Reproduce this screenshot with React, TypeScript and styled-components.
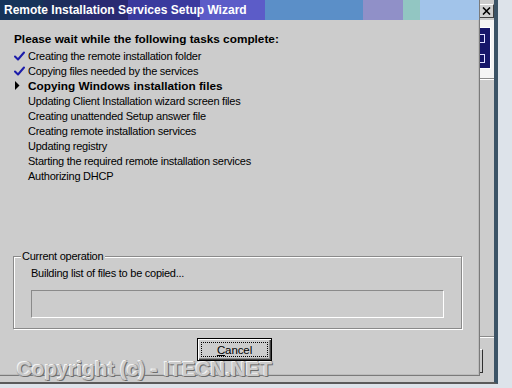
import React from 'react'
import styled, { createGlobalStyle } from 'styled-components'

const GlobalStyle = createGlobalStyle`
    html, body {
        margin: 0;
        padding: 0;
        background: #dde3ea;
    }
    body {
        font-family: "Liberation Sans", Arial, sans-serif;
        font-size: 11px;
        color: #000;
    }
`

const Desktop = styled.div`
    position: relative;
    width: 512px;
    height: 388px;
    overflow: hidden;
    background: #dde3ea;
`

/* the wizard window that sits behind the progress dialog */
const BackWindow = styled.div`
    position: absolute;
    left: 0;
    top: 0;
    width: 498px;
    height: 384px;
    box-sizing: border-box;
    background: #cccccc;
    border-right: 4px solid #3b5366;
    border-bottom: 2px solid #5a5a5a;
    display: flex;
    flex-direction: column;
`

const BackTitle = styled.div`
    height: 20px;
    display: flex;
    align-items: center;
    justify-content: flex-end;
`

const CloseButton = styled.div`
    width: 15px;
    height: 14px;
    box-sizing: border-box;
    background: #d0d0d0;
    border: 1px solid;
    border-color: #fff #404040 #404040 #fff;
    display: flex;
    align-items: center;
    justify-content: center;
    margin-top: 1px;
`

const BackHeader = styled.div`
    height: 60px;
    background: #f4f4f4;
    border-bottom: 1px solid #fff;
    box-shadow: 0 -1px 0 #8a8a8a inset;
    display: flex;
    justify-content: flex-end;
    padding: 7px 3px 0 0;
    box-sizing: border-box;
`

const HeaderArt = styled.div`
    width: 14px;
    height: 40px;
    background: #16166a;
    border: 1px solid #fff;
    display: flex;
    flex-direction: column;
    justify-content: space-around;
    align-items: flex-start;
`

const ArtMark = styled.div`
    width: 5px;
    height: 7px;
    border: 1px solid #e0e0ff;
    margin-left: 2px;
`

const BackBody = styled.div`
    flex: 1;
`

const BackFooter = styled.div`
    border-top: 1px solid #8a8a8a;
    box-shadow: 0 1px 0 #fff inset;
    height: 46px;
    display: flex;
    justify-content: flex-end;
    padding: 12px 11px 0 0;
    box-sizing: border-box;
`

const BackButton = styled.div`
    width: 75px;
    height: 24px;
    box-sizing: border-box;
    border: 1px solid;
    border-color: #fff #303030 #303030 #fff;
`

/* the progress dialog in front */
const Dialog = styled.div`
    position: absolute;
    left: 0;
    top: 0;
    width: 480px;
    height: 376px;
    box-sizing: border-box;
    background: #cccccc;
    border-right: 1px solid #7a7a7a;
    border-bottom: 1px solid #7a7a7a;
    box-shadow: inset -1px -1px 0 #bcbcbc;
    display: flex;
    flex-direction: column;
`

const TitleBar = styled.div`
    height: 20px;
    display: flex;
    align-items: center;
    padding-left: 4px;
    background: linear-gradient(
        to right,
        #16345a 0, #16345a 43px,
        #1d2d5c 43px, #1d2d5c 80px,
        #2a2a72 80px, #2a2a72 128px,
        #3a3a9e 128px, #3a3a9e 200px,
        #5c5cc8 200px, #5c5cc8 265px,
        #5b8fc8 265px, #5b8fc8 363px,
        #9090c8 363px, #9090c8 403px,
        #92c6c2 403px, #92c6c2 420px,
        #a2c4ea 420px, #a2c4ea 100%
    );
    color: #fff;
    font-weight: bold;
    font-size: 12px;
    white-space: nowrap;
`

const Body = styled.div`
    flex: 1;
    display: flex;
    flex-direction: column;
    padding: 12px 17px 14px 13px;
`

const Heading = styled.div`
    font-weight: bold;
    font-size: 11.8px;
    line-height: 15px;
    padding-left: 1px;
`

const TaskList = styled.div`
    margin-top: 1px;
    display: flex;
    flex-direction: column;
`

const TaskRow = styled.div<{ $current?: boolean }>`
    display: grid;
    grid-template-columns: 15px 1fr;
    align-items: center;
    height: 15px;
    font-size: ${p => (p.$current ? '11.8px' : '11px')};
    font-weight: ${p => (p.$current ? 'bold' : 'normal')};
    letter-spacing: ${p => (p.$current ? '0' : '-0.25px')};
    white-space: nowrap;
`

const Marker = styled.div`
    display: flex;
    align-items: center;
    padding-left: 1px;
`

const Group = styled.fieldset`
    margin: auto 0 0 0;
    padding: 0 17px 10px 17px;
    border: 1px solid #8a8a8a;
    box-shadow: inset 1px 1px 0 #fff, 1px 1px 0 #fff;
    display: flex;
    flex-direction: column;
    min-width: 0;
`

const Legend = styled.legend`
    padding: 0 2px 0 1px;
    margin-left: -10px;
    font-size: 11px;
    line-height: 15px;
    letter-spacing: -0.25px;
    background: #cccccc;
`

const OperationText = styled.div`
    margin-top: 2px;
    line-height: 15px;
    letter-spacing: -0.25px;
`

const ProgressBar = styled.div`
    margin-top: 9px;
    height: 28px;
    box-sizing: border-box;
    border: 1px solid;
    border-color: #8a8a8a #fff #fff #8a8a8a;
`

const ButtonRow = styled.div`
    display: flex;
    padding-left: 184px;
    margin-top: 9px;
`

const PushButton = styled.div<{ $default?: boolean }>`
    width: 75px;
    height: 23px;
    box-sizing: border-box;
    border: 1px solid ${p => (p.$default ? '#000' : 'transparent')};
    box-shadow: inset 1px 1px 0 #fff, inset -1px -1px 0 #404040, inset -2px -2px 0 #8a8a8a;
    padding: 3px;
    display: flex;
`

const FocusRing = styled.div`
    flex: 1;
    border: 1px dotted #000;
    display: flex;
    align-items: center;
    justify-content: center;
    font-size: 11.5px;
    letter-spacing: -0.1px;
`

const Watermark = styled.div`
    position: absolute;
    left: 17px;
    top: 357px;
    font-family: "Liberation Sans", Arial, sans-serif;
    font-weight: bold;
    font-size: 20.6px;
    color: #cbcbcb;
    white-space: nowrap;
    text-shadow: 1px 1px 0 #6e6e6e, -1px -1px 0 #f4f4f4, 1px -1px 0 #a8a8a8, -1px 1px 0 #a8a8a8;
`

const CheckIcon = () => (
    <svg width="11" height="10" viewBox="0 0 11 10">
        <path d="M1 5.5 L4 8.5 L10 1.5" fill="none" stroke="#1c1caa" strokeWidth="2" strokeLinecap="round" strokeLinejoin="round" />
    </svg>
)

const ArrowIcon = () => (
    <svg width="6" height="9" viewBox="0 0 6 9">
        <polygon points="1,0 5.5,4.5 1,9" fill="#000" />
    </svg>
)

const tasks: { label: string; state: 'done' | 'current' | 'todo' }[] = [
    { label: 'Creating the remote installation folder', state: 'done' },
    { label: 'Copying files needed by the services', state: 'done' },
    { label: 'Copying Windows installation files', state: 'current' },
    { label: 'Updating Client Installation wizard screen files', state: 'todo' },
    { label: 'Creating unattended Setup answer file', state: 'todo' },
    { label: 'Creating remote installation services', state: 'todo' },
    { label: 'Updating registry', state: 'todo' },
    { label: 'Starting the required remote installation services', state: 'todo' },
    { label: 'Authorizing DHCP', state: 'todo' },
]

export default function App() {
    return (
        <Desktop>
            <GlobalStyle />
            <BackWindow>
                <BackTitle>
                    <CloseButton>
                        <svg width="9" height="8" viewBox="0 0 9 8">
                            <path d="M1 0.5 L8 7.5 M8 0.5 L1 7.5" stroke="#000" strokeWidth="1.6" />
                        </svg>
                    </CloseButton>
                </BackTitle>
                <BackHeader>
                    <HeaderArt>
                        <ArtMark />
                        <ArtMark />
                    </HeaderArt>
                </BackHeader>
                <BackBody />
                <BackFooter>
                    <BackButton />
                </BackFooter>
            </BackWindow>

            <Dialog>
                <TitleBar>Remote Installation Services Setup Wizard</TitleBar>
                <Body>
                    <Heading>Please wait while the following tasks complete:</Heading>
                    <TaskList>
                        {tasks.map(t => (
                            <TaskRow key={t.label} $current={t.state === 'current'}>
                                <Marker>
                                    {t.state === 'done' && <CheckIcon />}
                                    {t.state === 'current' && <ArrowIcon />}
                                </Marker>
                                <span>{t.label}</span>
                            </TaskRow>
                        ))}
                    </TaskList>
                    <Group>
                        <Legend>Current operation</Legend>
                        <OperationText>Building list of files to be copied...</OperationText>
                        <ProgressBar />
                    </Group>
                    <ButtonRow>
                        <PushButton $default>
                            <FocusRing>
                                <span><u>C</u>ancel</span>
                            </FocusRing>
                        </PushButton>
                    </ButtonRow>
                </Body>
            </Dialog>

            <Watermark>Copyright (c) - ITECN.NET</Watermark>
        </Desktop>
    )
}
